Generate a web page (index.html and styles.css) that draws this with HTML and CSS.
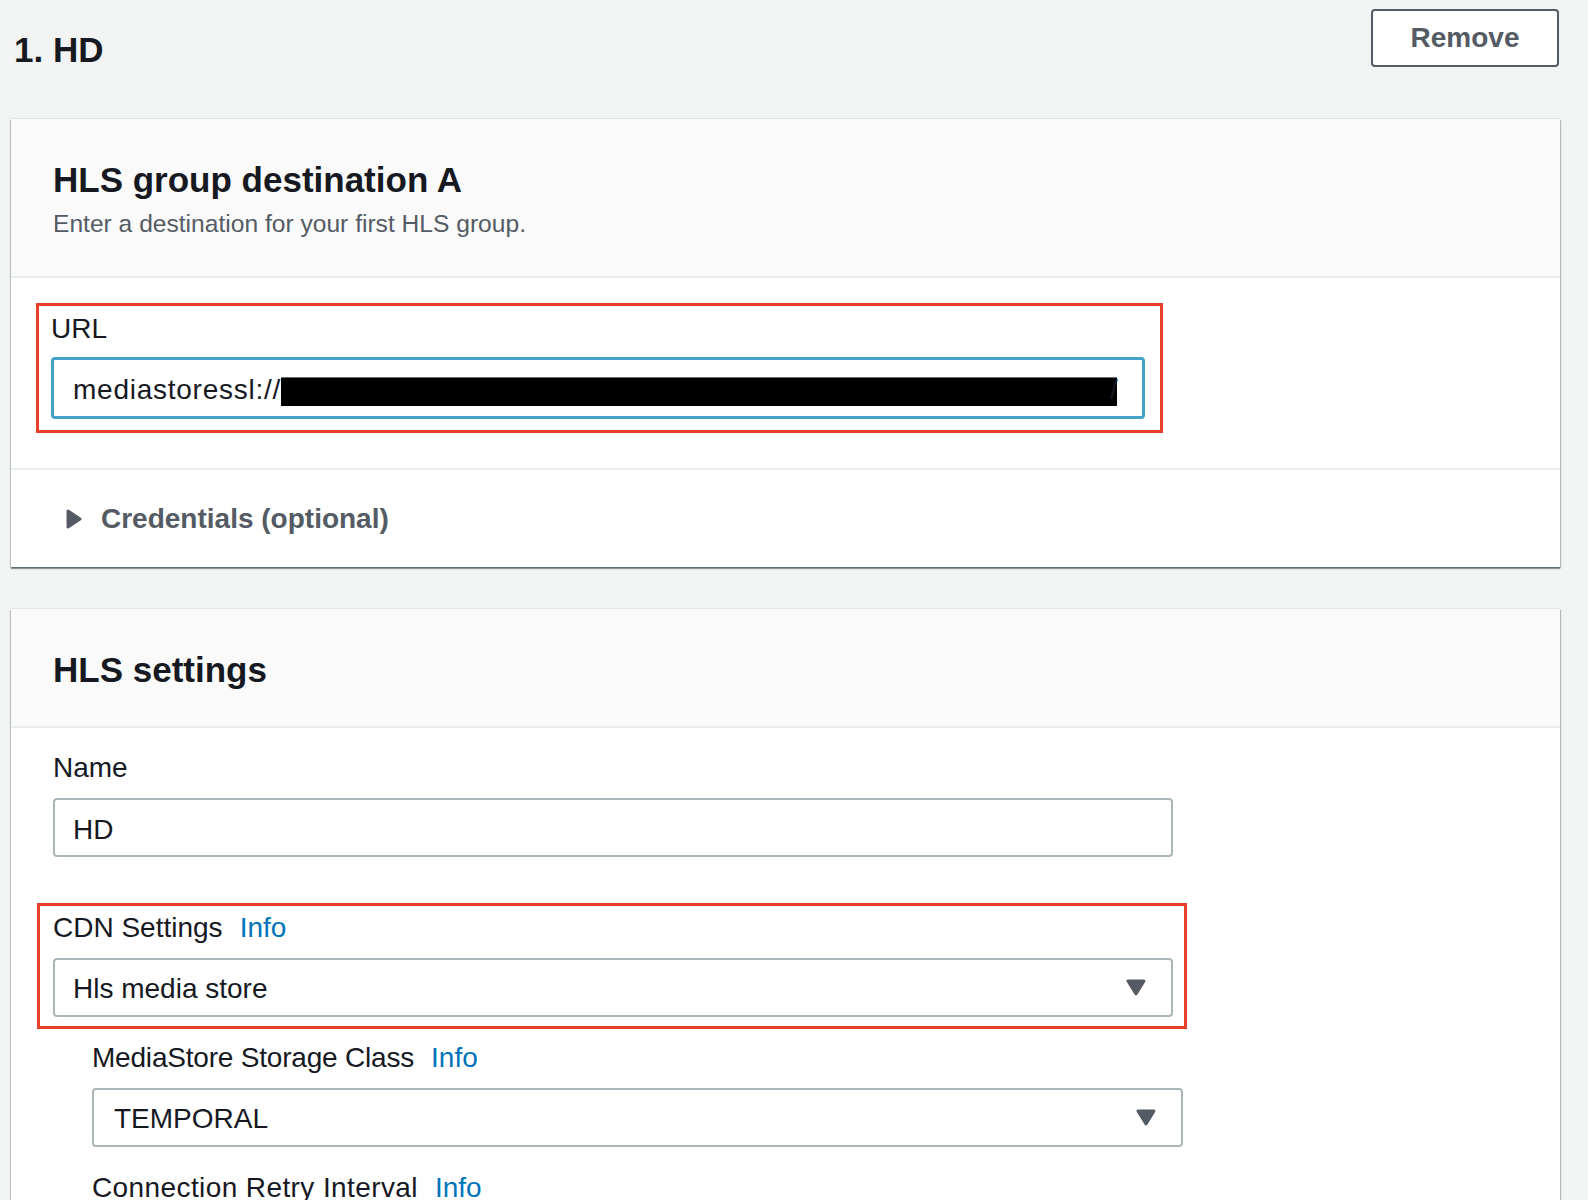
FILE: index.html
```html
<!DOCTYPE html>
<html lang="en">
<head>
<meta charset="utf-8">
<title>HLS group</title>
<link rel="stylesheet" href="styles.css">
</head>
<body>
<div class="page">
  <div class="topbar">
    <h1 class="title">1. HD</h1>
    <button class="btn-remove" type="button">Remove</button>
  </div>

  <section class="panel panel-dest">
    <header class="panel-header">
      <h2 class="panel-title">HLS group destination A</h2>
      <p class="panel-desc">Enter a destination for your first HLS group.</p>
    </header>
    <div class="panel-body">
      <div class="annot annot-url">
        <div class="label label-url">URL</div>
        <div class="input input-focus"><span class="url-text">mediastoressl://</span><span class="redact"></span><span class="url-tail">/</span></div>
      </div>
    </div>
    <div class="expander">
      <svg class="caret-right" width="16" height="20" viewBox="0 0 16 20"><polygon points="2,2 14,10 2,18" fill="#545b64" stroke="#545b64" stroke-width="3" stroke-linejoin="round"/></svg>
      <span class="expander-text">Credentials (optional)</span>
    </div>
  </section>

  <section class="panel panel-settings">
    <header class="panel-header panel-header-short">
      <h2 class="panel-title">HLS settings</h2>
    </header>
    <div class="panel-body panel-body-settings">
      <div class="field">
        <div class="label">Name</div>
        <div class="input input-name">HD</div>
      </div>

      <div class="annot annot-cdn">
        <div class="label">CDN Settings<a class="info" href="#">Info</a></div>
        <div class="select select-cdn">
          <span class="select-value">Hls media store</span>
          <svg class="caret-down" width="20" height="17" viewBox="0 0 20 17"><polygon points="2,2 18,2 10,15" fill="#545b64" stroke="#545b64" stroke-width="3" stroke-linejoin="round"/></svg>
        </div>
      </div>

      <div class="subfields">
        <div class="field subfield-first">
          <div class="label label-tight">MediaStore Storage Class<a class="info" href="#">Info</a></div>
          <div class="select select-sub">
            <span class="select-value">TEMPORAL</span>
            <svg class="caret-down" width="20" height="17" viewBox="0 0 20 17"><polygon points="2,2 18,2 10,15" fill="#545b64" stroke="#545b64" stroke-width="3" stroke-linejoin="round"/></svg>
          </div>
        </div>
        <div class="field subfield-next">
          <div class="label label-wide">Connection Retry Interval<a class="info" href="#">Info</a></div>
          <div class="input input-sub">1</div>
        </div>
      </div>
    </div>
  </section>
</div>
</body>
</html>
```

FILE: styles.css
```css
* { box-sizing: border-box; }

html, body {
  margin: 0;
  padding: 0;
}

body {
  background: #f2f3f3;
  font-family: "Liberation Sans", Arial, sans-serif;
  color: #16191f;
  height: 1200px;
  overflow: hidden;
}

.page {
  padding: 0 28px 0 11px;
}

/* ---------- top bar ---------- */
.topbar {
  display: flex;
  justify-content: space-between;
  align-items: flex-start;
  height: 119px;
  padding: 9px 1px 0 3px;
}

.title {
  margin: 21px 0 0;
  font-size: 35px;
  line-height: 40px;
  font-weight: 700;
  color: #16191f;
}

.btn-remove {
  width: 188px;
  height: 58px;
  padding: 0;
  border: 2px solid #545b64;
  border-radius: 4px;
  background: #ffffff;
  color: #545b64;
  font-family: "Liberation Sans", Arial, sans-serif;
  font-size: 28px;
  font-weight: 700;
  line-height: 54px;
}

/* ---------- panels ---------- */
.panel {
  background: #ffffff;
  box-shadow: 0 2px 1px 0 rgba(0, 28, 36, 0.38),
              1px 1px 1px 0 rgba(0, 28, 36, 0.22),
              -1px 1px 1px 0 rgba(0, 28, 36, 0.18),
              0 -1px 0 0 rgba(0, 28, 36, 0.06);
}

.panel-settings {
  margin-top: 42px;
}

.panel-header {
  height: 159px;
  padding: 41px 40px 0 42px;
  background: #fafafa;
  border-bottom: 2px solid #eaeded;
}

.panel-header-short {
  height: 119px;
}

.panel-title {
  margin: 0;
  font-size: 35px;
  line-height: 40px;
  font-weight: 700;
  color: #16191f;
}

.panel-desc {
  margin: 8px 0 0;
  font-size: 24.6px;
  line-height: 32px;
  color: #545b64;
}

.panel-body {
  padding: 25px 40px 35px 42px;
  border-bottom: 2px solid #eaeded;
}

.panel-body-settings {
  padding-top: 22px;
  border-bottom: none;
}

/* ---------- annotation boxes ---------- */
.annot {
  border: 3px solid #e9402a;
}

.annot-url {
  width: 1127px;
  margin-left: -17px;
  padding: 5px 15px 11px 12px;
}

.annot-cdn {
  width: 1150px;
  margin-top: 46px;
  margin-left: -16px;
  padding: 4px 11px 9px 13px;
}

/* ---------- form fields ---------- */
.label {
  font-size: 28px;
  line-height: 36px;
  color: #16191f;
  margin-bottom: 12px;
}

.label-url {
  margin-bottom: 10px;
}

.label-tight {
  letter-spacing: -0.2px;
}

.label-wide {
  letter-spacing: 0.4px;
}

.info {
  margin-left: 17px;
  color: #0073bb;
  text-decoration: none;
  letter-spacing: 0;
}

.input,
.select {
  height: 59px;
  border: 2px solid #aab7b8;
  border-radius: 4px;
  background: #ffffff;
  font-size: 28px;
  line-height: 36px;
  color: #16191f;
  white-space: nowrap;
  overflow: hidden;
}

.input {
  padding: 12px 20px 0 18px;
}

.input-focus {
  height: 62px;
  border: 3px solid #44a1c9;
  padding: 12px 20px 0 19px;
}

.url-text {
  letter-spacing: 0.75px;
}

.redact {
  display: inline-block;
  width: 836px;
  height: 29px;
  background: #000000;
  border-top: 1px solid #6b6b6b;
  vertical-align: -7px;
}

.url-tail {
  margin-left: -7px;
}

.input-name {
  width: 1120px;
}

.select {
  display: flex;
  align-items: center;
  justify-content: space-between;
  padding: 0 25px 0 18px;
}

.select-cdn {
  width: 1120px;
}

.select-value {
  padding-top: 2px;
}

.caret-down {
  display: block;
  flex: none;
}

.subfields {
  margin-left: 39px;
}

.subfield-first {
  margin-top: 11px;
}

.select-sub {
  width: 1091px;
  padding-left: 20px;
}

.subfield-next {
  margin-top: 23px;
}

.input-sub {
  width: 1091px;
}

/* ---------- expander ---------- */
.expander {
  display: flex;
  align-items: center;
  height: 97px;
  padding: 0 0 0 55px;
}

.caret-right {
  display: block;
  flex: none;
}

.expander-text {
  margin-left: 19px;
  font-size: 28px;
  line-height: 36px;
  font-weight: 700;
  color: #545b64;
}
```
